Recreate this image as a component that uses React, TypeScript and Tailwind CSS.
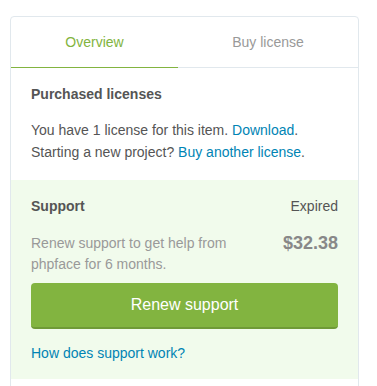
export default function App() {
  return (
    <div className="min-h-[386px] bg-white pl-[10px] pt-[16px] pr-[18px] font-['Liberation_Sans',Arial,sans-serif]">
      <div className="rounded-t-[4px] border border-[#e1e8ed] bg-white">
        <div className="flex border-b border-[#e1e8ed]">
          <div className="-mb-px flex h-[51px] w-[167px] items-center justify-center border-b border-[#82b440] text-[14px] text-[#82b440]">
            Overview
          </div>
          <div className="flex h-[50px] flex-1 items-center justify-center text-[14px] text-[#999]">
            Buy license
          </div>
        </div>
        <div className="px-[20px] pt-[16px] pb-[17px]">
          <h2 className="text-[14px] font-bold leading-[20px] text-[#555]">Purchased licenses</h2>
          <p className="mt-[15px] text-[14px] leading-[22px] text-[#555]">
            You have 1 license for this item. <a className="text-[#0084b4]">Download</a>.
            <br />
            Starting a new project? <a className="text-[#0084b4]">Buy another license</a>.
          </p>
        </div>
        <div className="bg-[#f1fbec] px-[20px] pt-[16px] pb-[16px]">
          <div className="flex items-center justify-between leading-[20px]">
            <span className="text-[14px] font-bold text-[#555]">Support</span>
            <span className="text-[14px] text-[#555]">Expired</span>
          </div>
          <div className="mt-[17px] flex items-start justify-between">
            <p className="text-[14px] leading-[21px] text-[#999]">
              Renew support to get help from
              <br />
              phpface for 6 months.
            </p>
            <span className="text-[18px] font-bold leading-[21px] text-[#888]">$32.38</span>
          </div>
          <button className="mt-[8px] h-[46px] w-full rounded-[4px] border-b-2 border-[#6f9a37] bg-[#82b440] text-[16px] text-white">
            Renew support
          </button>
          <a className="mt-[14px] block text-[14px] leading-[20px] text-[#0084b4]">How does support work?</a>
        </div>
        <div className="h-[20px]" />
      </div>
    </div>
  )
}
